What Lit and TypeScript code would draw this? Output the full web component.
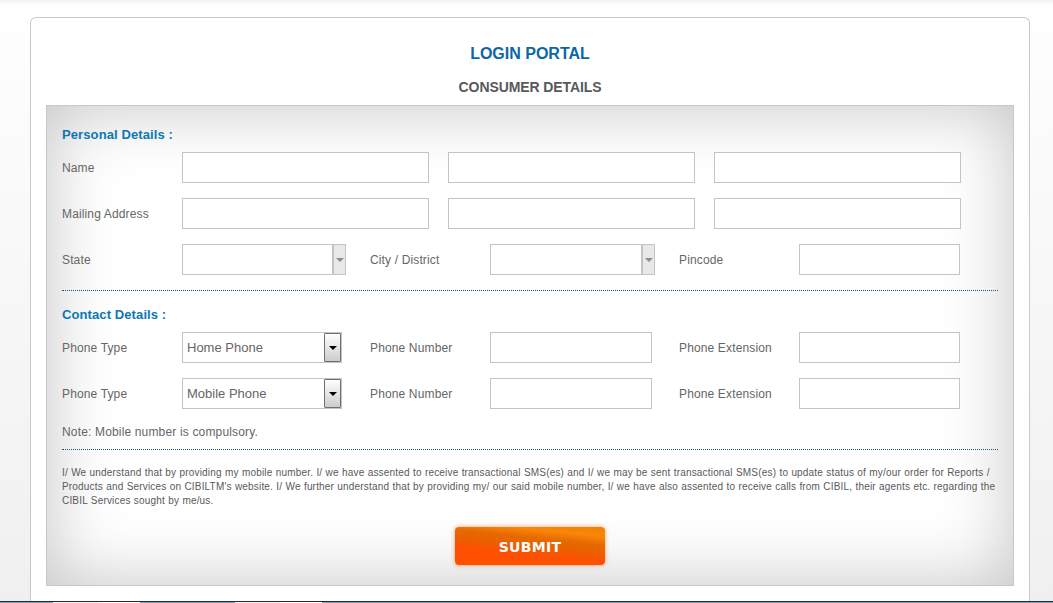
import { LitElement, html, css } from 'lit';
import { customElement } from 'lit/decorators.js';

// Blue and pale pieces of the clipped bar along the bottom edge of the page.
const STRIP = [
  { width: 53, color: '#8f9db3' },
  { width: 45, color: '#f4f4f4' },
  { width: 42, color: '#ffffff' },
  { width: 95, color: '#8f9db3' },
  { width: 45, color: '#f4f4f4' },
  { width: 42, color: '#ffffff' },
  { width: 731, color: '#8f9db3' },
];

@customElement('app-root')
export class AppRoot extends LitElement {
  static styles = css`
    :host {
      display: block;
      height: 603px;
      overflow: hidden;
      font-family: 'Liberation Sans', Arial, sans-serif;
      background: linear-gradient(#fff 0, #fdfdfd 60px, #f0f0f0 600px);
    }

    .topshade {
      height: 5px;
      background: linear-gradient(#f2f2f2, #fdfdfd);
    }

    .card {
      box-sizing: border-box;
      width: 1000px;
      height: 584px;
      margin: 12px 0 0 30px;
      padding: 0 15px;
      background: #fff;
      border: 1px solid #c8c8c8;
      border-bottom: 0;
      border-radius: 6px 6px 0 0;
    }

    h1 {
      margin: 0;
      padding-top: 26px;
      font-size: 16px;
      line-height: 20px;
      text-align: center;
      color: #0b66a6;
    }

    h2 {
      margin: 14px 0 0;
      font-size: 14px;
      line-height: 18px;
      letter-spacing: -0.1px;
      text-align: center;
      color: #58595b;
    }

    .panel {
      box-sizing: border-box;
      height: 481px;
      margin-top: 9px;
      padding: 21px 15px 0;
      background: #fff;
      border: 1px solid #c8c8c8;
      box-shadow: inset 0 0 70px rgba(0, 0, 0, 0.24);
    }

    h3 {
      margin: 0;
      font-size: 13px;
      line-height: 16px;
      letter-spacing: 0.1px;
      color: #0b78b5;
    }

    .row {
      display: flex;
      align-items: center;
      height: 31px;
      margin-top: 15px;
      font-size: 12px;
      letter-spacing: 0.14px;
      color: #666;
    }

    h3 + .row {
      margin-top: 9px;
    }

    .label {
      width: 120px;
      flex: none;
    }

    .mid {
      width: 120px;
      margin-left: 24px;
      flex: none;
    }

    .mid.after-type {
      margin-left: 28px;
    }

    .mid.ext {
      margin-left: 27px;
    }

    .field {
      box-sizing: border-box;
      height: 31px;
      background: #fff;
      border: 1px solid #c4c4c4;
      flex: none;
    }

    .wide {
      width: 247px;
      margin-right: 19px;
    }

    .short {
      width: 162px;
    }

    .pin {
      width: 161px;
    }

    .select {
      display: flex;
      align-items: center;
      justify-content: space-between;
      width: 164px;
      padding-left: 4px;
      font-size: 13px;
      letter-spacing: 0;
      color: #666;
    }

    .select.city {
      width: 165px;
    }

    .select.type {
      width: 160px;
      padding-right: 0;
    }

    .flat {
      display: flex;
      align-items: center;
      justify-content: center;
      box-sizing: border-box;
      width: 13px;
      height: 29px;
      background: #e8e8e8;
      border-left: 2px solid #c4c4c4;
    }

    .flat i {
      border-top: 4px solid #8c8c8c;
      border-left: 4px solid transparent;
      border-right: 4px solid transparent;
    }

    .drop {
      display: flex;
      align-items: center;
      justify-content: center;
      box-sizing: border-box;
      width: 17px;
      height: 29px;
      background: linear-gradient(#fff, #ccc);
      border: 1px solid #6f6f6f;
      border-radius: 1px;
    }

    .drop i {
      border-top: 4px solid #000;
      border-left: 4px solid transparent;
      border-right: 4px solid transparent;
    }

    .rule {
      height: 0;
      margin-top: 15px;
      border-top: 1px dotted #0d5f75;
    }

    .contact {
      margin-top: 16px;
    }

    .note {
      margin: 16px 0 0;
      font-size: 12px;
      line-height: 14px;
      letter-spacing: 0.16px;
      color: #666;
    }

    .note + .rule {
      margin-top: 10px;
    }

    .legal {
      margin: 16px 0 0;
      font-size: 10px;
      line-height: 14px;
      letter-spacing: 0.18px;
      word-spacing: 0.3px;
      color: #58595b;
    }

    .actions {
      display: flex;
      justify-content: center;
      margin-top: 19px;
    }

    .submit {
      width: 150px;
      height: 38px;
      padding: 1px 0 0;
      border: 0;
      border-radius: 4px;
      font-family: 'DejaVu Sans', Verdana, sans-serif;
      font-size: 14px;
      font-weight: bold;
      letter-spacing: 0.3px;
      color: #fff;
      background: linear-gradient(186deg, #f08000 0, #fb8608 18%, #e56a00 34%, #ea5f00 50%, #ff4f00 68%);
      box-shadow: 0 0 4px rgba(240, 90, 20, 0.6);
    }

    .strip {
      display: flex;
      flex-direction: row;
      height: 1px;
      border-top: 1px solid #1f2a38;
    }
  `;

  render() {
    return html`
      <div class="topshade"></div>
      <div class="card">
        <h1>LOGIN PORTAL</h1>
        <h2>CONSUMER DETAILS</h2>
        <div class="panel">
          <h3>Personal Details :</h3>
          <div class="row">
            <span class="label">Name</span>
            <div class="field wide"></div>
            <div class="field wide"></div>
            <div class="field wide"></div>
          </div>
          <div class="row">
            <span class="label">Mailing Address</span>
            <div class="field wide"></div>
            <div class="field wide"></div>
            <div class="field wide"></div>
          </div>
          <div class="row">
            <span class="label">State</span>
            <div class="field select"><span></span><span class="flat"><i></i></span></div>
            <span class="mid">City / District</span>
            <div class="field select city"><span></span><span class="flat"><i></i></span></div>
            <span class="mid">Pincode</span>
            <div class="field pin"></div>
          </div>
          <div class="rule"></div>
          <h3 class="contact">Contact Details :</h3>
          <div class="row">
            <span class="label">Phone Type</span>
            <div class="field select type"><span>Home Phone</span><span class="drop"><i></i></span></div>
            <span class="mid after-type">Phone Number</span>
            <div class="field short"></div>
            <span class="mid ext">Phone Extension</span>
            <div class="field pin"></div>
          </div>
          <div class="row">
            <span class="label">Phone Type</span>
            <div class="field select type"><span>Mobile Phone</span><span class="drop"><i></i></span></div>
            <span class="mid after-type">Phone Number</span>
            <div class="field short"></div>
            <span class="mid ext">Phone Extension</span>
            <div class="field pin"></div>
          </div>
          <p class="note">Note: Mobile number is compulsory.</p>
          <div class="rule"></div>
          <p class="legal">
            I/ We understand that by providing my mobile number. I/ we have assented to receive transactional SMS(es) and I/ we may be sent transactional SMS(es) to update status of my/our order for Reports / Products and Services on CIBILTM's website. I/ We further understand that by providing my/ our said mobile number, I/ we have also assented to receive calls from CIBIL, their agents etc. regarding the CIBIL Services sought by me/us.
          </p>
          <div class="actions"><button class="submit">SUBMIT</button></div>
        </div>
      </div>
      <div class="strip">
        ${STRIP.map((s) => html`<span style="width:${s.width}px;background:${s.color}"></span>`)}
      </div>
    `;
  }
}
